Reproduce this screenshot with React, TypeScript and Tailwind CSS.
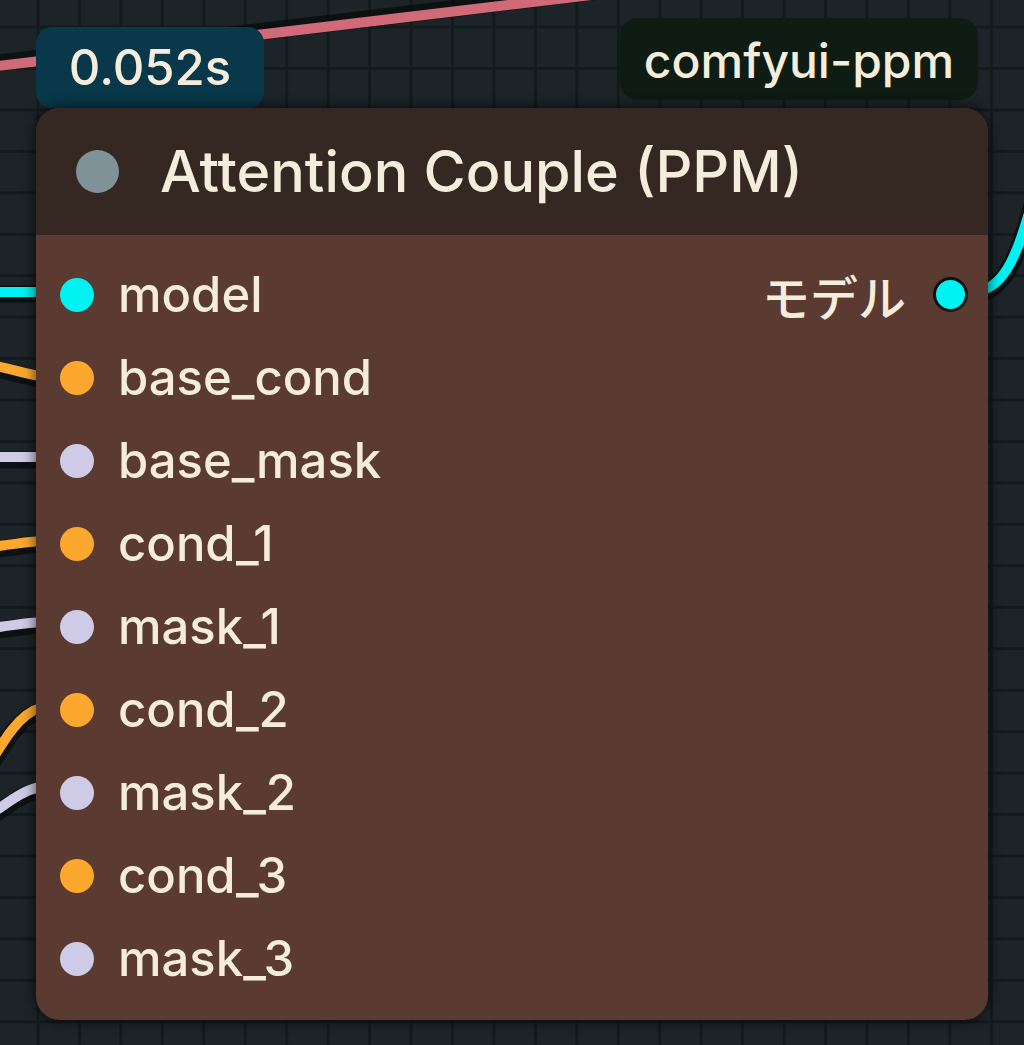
import React from "react";

const inputs: { name: string; color: string }[] = [
  { name: "model", color: "bg-[#00f2f2]" },
  { name: "base_cond", color: "bg-[#fca72e]" },
  { name: "base_mask", color: "bg-[#cdcbe6]" },
  { name: "cond_1", color: "bg-[#fca72e]" },
  { name: "mask_1", color: "bg-[#cdcbe6]" },
  { name: "cond_2", color: "bg-[#fca72e]" },
  { name: "mask_2", color: "bg-[#cdcbe6]" },
  { name: "cond_3", color: "bg-[#fca72e]" },
  { name: "mask_3", color: "bg-[#cdcbe6]" },
];

function Canvas() {
  const wires: { d: string; c: string; dy: number }[] = [
    { d: "M -10 67 L 600 -6", c: "#d06a79", dy: -3 },
    { d: "M -10 292 L 40 292", c: "#00f2f2", dy: 2 },
    { d: "M -10 365 C 10 368, 25 374, 40 376", c: "#fca72e", dy: 3 },
    { d: "M -10 457 L 40 457", c: "#cdcbe6", dy: 3 },
    { d: "M -10 547 C 10 545, 25 542, 40 541", c: "#fca72e", dy: 3 },
    { d: "M -10 628 C 10 626, 25 623, 40 622", c: "#cdcbe6", dy: 3 },
    { d: "M -40 810 C -10 770, 10 716, 40 708", c: "#fca72e", dy: 3 },
    { d: "M -40 832 C 0 812, 15 792, 40 787", c: "#cdcbe6", dy: 3 },
    { d: "M 980 291 C 1005 285, 1018 255, 1034 195", c: "#00f2f2", dy: 3 },
  ];
  return (
    <svg className="absolute inset-0" width="1024" height="1045" viewBox="0 0 1024 1045">
      <defs>
        <pattern id="grid" x="36.5" y="25.5" width="41.45" height="41.45" patternUnits="userSpaceOnUse">
          <rect x="0" y="0" width="41.45" height="41.45" fill="#1c2427" />
          <rect x="0" y="0" width="3" height="41.45" fill="#131a1c" />
          <rect x="0" y="0" width="41.45" height="3" fill="#131a1c" />
        </pattern>
      </defs>
      <rect x="0" y="0" width="1024" height="1045" fill="url(#grid)" />
      {wires.map((w, i) => (
        <g key={i}>
          <path d={w.d} stroke="#070b0c" strokeOpacity="0.75" strokeWidth="17" fill="none" transform={`translate(0 ${w.dy})`} />
          <path d={w.d} stroke={w.c} strokeWidth="10" fill="none" />
        </g>
      ))}
    </svg>
  );
}

export default function App() {
  return (
    <div
      className="relative w-[1024px] h-[1045px] overflow-hidden bg-[#1c2427] text-[#f4eddc] font-medium"
      style={{ fontFamily: "Inter, 'Noto Sans CJK JP', sans-serif" }}
    >
      <Canvas />
      <div className="relative flex flex-col pl-[36px] pt-[18px]">
        <div className="flex items-end justify-between w-[952px] h-[90px]">
          <div className="flex items-center justify-center h-[81px] w-[228px] rounded-[16px] bg-[#083849] text-[49px] leading-none">
            0.052s
          </div>
          <div className="flex items-center justify-center h-[82px] w-[358px] mr-[10px] mb-[8px] rounded-[18px] bg-[#0e1c13] text-[48px] leading-none pt-[4px]">
            comfyui-ppm
          </div>
        </div>
        <div className="w-[952px] h-[912px] rounded-[24px] bg-[#5b3a31] shadow-[0_0_14px_rgba(0,0,0,0.7)] flex flex-col overflow-hidden">
          <div className="h-[127px] bg-[#352823] flex items-center pl-[40px] gap-[41px] shrink-0">
            <div className="w-[43px] h-[43px] rounded-full bg-[#7e9297]" />
            <div className="text-[57.5px] leading-none">Attention Couple (PPM)</div>
          </div>
          <div className="flex flex-col pt-[18px]">
            {inputs.map((inp, i) => (
              <div key={inp.name} className="h-[83px] flex items-center justify-between pl-[24px] pr-[20px]">
                <div className="flex items-center gap-[24px]">
                  <div className={`w-[34px] h-[34px] rounded-full ${inp.color}`} />
                  <span className="text-[49px] leading-none">{inp.name}</span>
                </div>
                {i === 0 && (
                  <div className="flex items-center gap-[27px]">
                    <span className="text-[48px] leading-none font-medium" style={{ fontFamily: "'Noto Sans CJK JP', sans-serif" }}>
                      モデル
                    </span>
                    <div className="w-[35px] h-[35px] rounded-full bg-[#00f2f2] border-[3px] border-[#111]" />
                  </div>
                )}
              </div>
            ))}
          </div>
        </div>
      </div>
    </div>
  );
}
